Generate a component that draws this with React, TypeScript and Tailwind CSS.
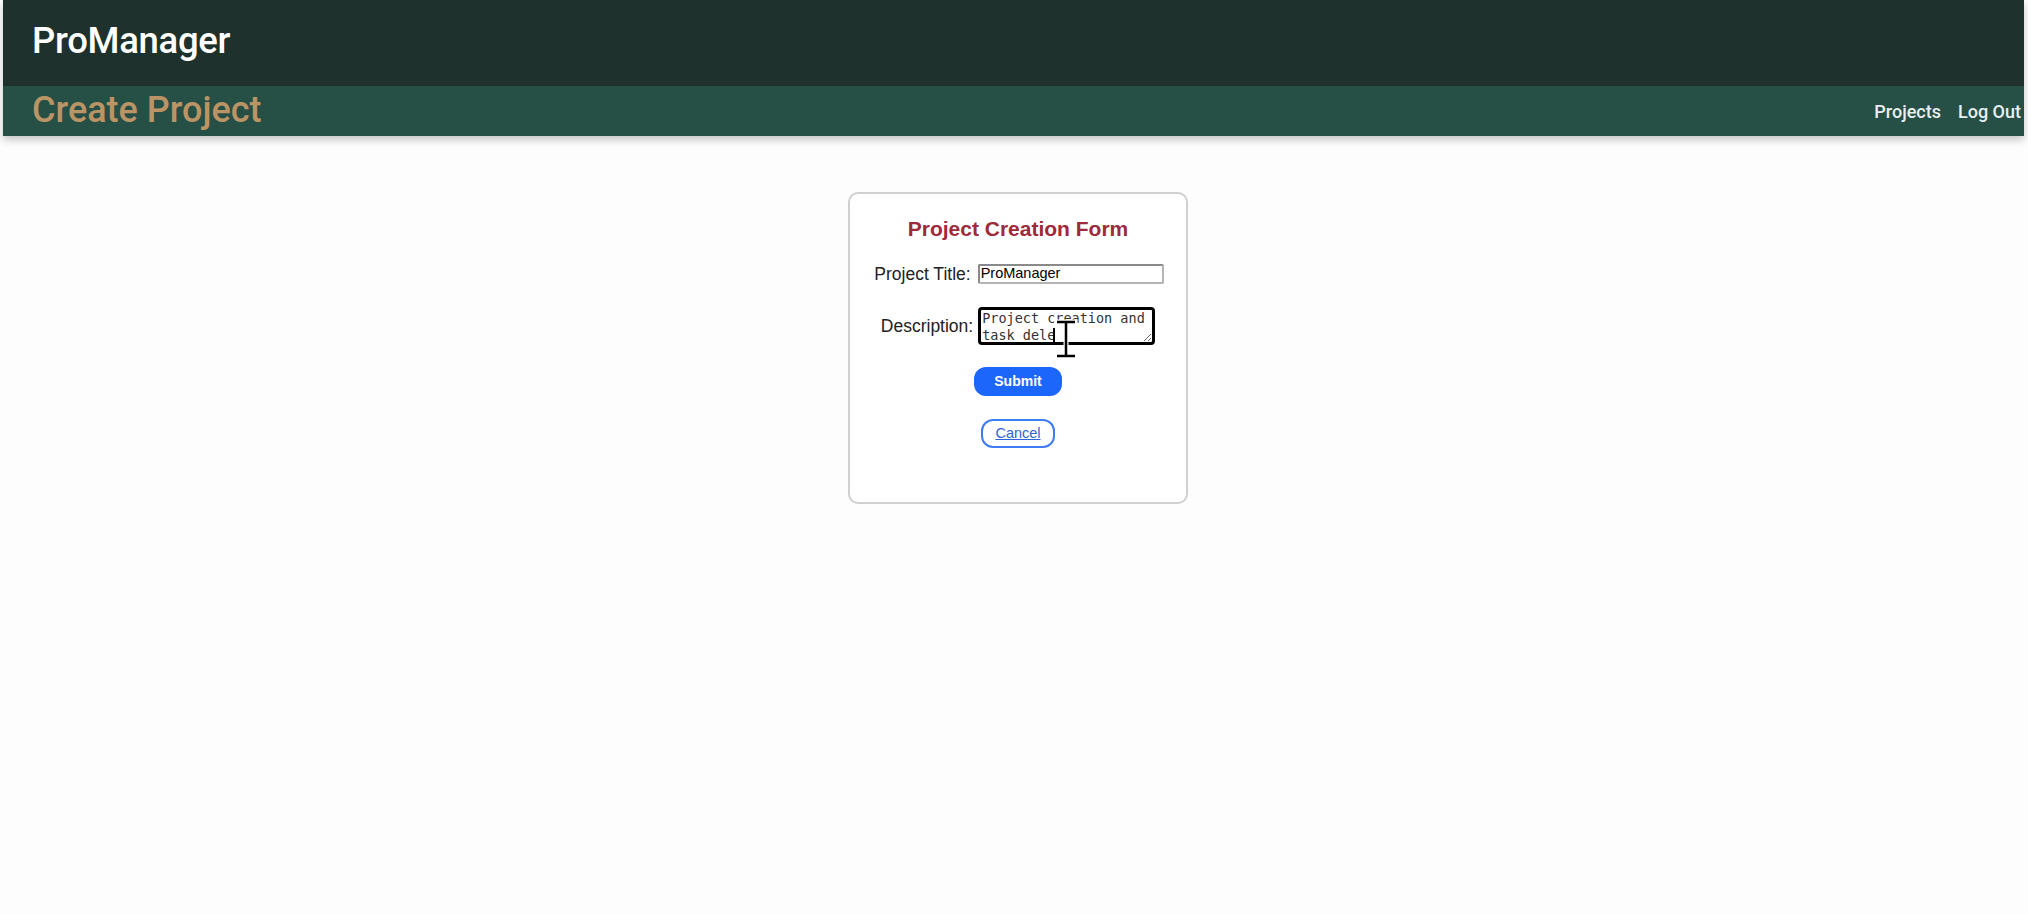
import { useState } from 'react';

const heading = { fontFamily: 'Roboto, "Noto Sans", sans-serif' };
const arial = { fontFamily: '"Liberation Sans", Arial, sans-serif' };

export default function App() {
  const [title, setTitle] = useState('ProManager');
  const [desc, setDesc] = useState('Project creation and task dele');

  return (
    <div className="min-h-screen bg-[#fdfdfd] pl-[3px] pr-[4px]">
      {/* Top header */}
      <header className="relative z-10 shadow-[0_4px_8px_rgba(0,0,0,0.22)]">
        <div className="h-[86px] bg-[#1e312c] flex items-center pl-[29px]">
          <span className="text-[36.5px] font-medium text-white tracking-[-0.3px] leading-none pb-[4px]" style={heading}>
            ProManager
          </span>
        </div>
        <div className="h-[50px] bg-[#264f45] flex items-center justify-between pl-[29px] pr-[3px]">
          <span className="text-[36px] font-medium text-[#bb9466] leading-none pb-[2px]" style={heading}>
            Create Project
          </span>
          <nav className="flex items-center gap-[17px] text-[18px] font-medium text-[#e8f0f0]" style={heading}>
            <a href="#">Projects</a>
            <a href="#">Log Out</a>
          </nav>
        </div>
      </header>

      {/* Form card */}
      <div className="flex justify-center pt-[56px] pl-[9px]">
        <div
          className="w-[340px] h-[312px] border-2 border-[#d0d0d0] rounded-[10px] bg-white flex flex-col items-center pt-[23px]"
          style={arial}
        >
          <h2 className="text-[21px] leading-[24px] font-bold text-[#9e2a3a]">Project Creation Form</h2>

          <div className="mt-[22px] flex items-center h-[21px] pl-[2px]">
            <label className="text-[17.5px] leading-[20px] text-[#222] mr-[7px]">Project Title:</label>
            <input
              value={title}
              onChange={(e) => setTitle(e.target.value)}
              className="w-[186px] h-[20px] border-2 border-t-[#8a8a8a] border-l-[#8a8a8a] border-r-[#b5b5b5] border-b-[#b5b5b5] rounded-[2px] px-[1px] text-[14.5px] text-black outline-none bg-white"
              style={arial}
            />
          </div>

          <div className="mt-[23px] flex items-center">
            <label className="text-[17.5px] leading-[20px] text-[#222] mr-[5px]">Description:</label>
            <div className="relative">
              <textarea
                value={desc}
                onChange={(e) => setDesc(e.target.value)}
                className="block w-[177px] h-[38px] border-[3px] border-black rounded-[4px] px-[1px] py-0 text-[13.5px] leading-[17px] text-[#333] overflow-hidden outline-none"
                style={{ fontFamily: '"DejaVu Sans Mono", "Liberation Mono", monospace' }}
              />
              {/* text caret */}
              <div className="absolute left-[75px] top-[21px] w-[1.5px] h-[15px] bg-black" />
              {/* mouse I-beam cursor */}
              <svg className="absolute left-[76px] top-[12px]" width="24" height="40" viewBox="0 0 24 40">
                <g stroke="#fff" strokeWidth="5" fill="none" strokeLinecap="square">
                  <path d="M3 3h18M12 3v34M3 37h18" />
                </g>
                <g stroke="#000" strokeWidth="2.5" fill="none">
                  <path d="M3 3h18M12 3v34M3 37h18" />
                </g>
              </svg>
            </div>
          </div>

          <button className="mt-[22px] w-[88px] h-[29px] rounded-[12px] bg-[#1d66fb] text-white text-[14px] font-bold">
            Submit
          </button>

          <a
            href="#"
            className="mt-[23px] w-[74px] h-[29px] rounded-[12px] border-2 border-[#3f7cf2] flex items-center justify-center text-[14.5px] text-[#2f63d8] underline"
          >
            Cancel
          </a>
        </div>
      </div>
    </div>
  );
}
